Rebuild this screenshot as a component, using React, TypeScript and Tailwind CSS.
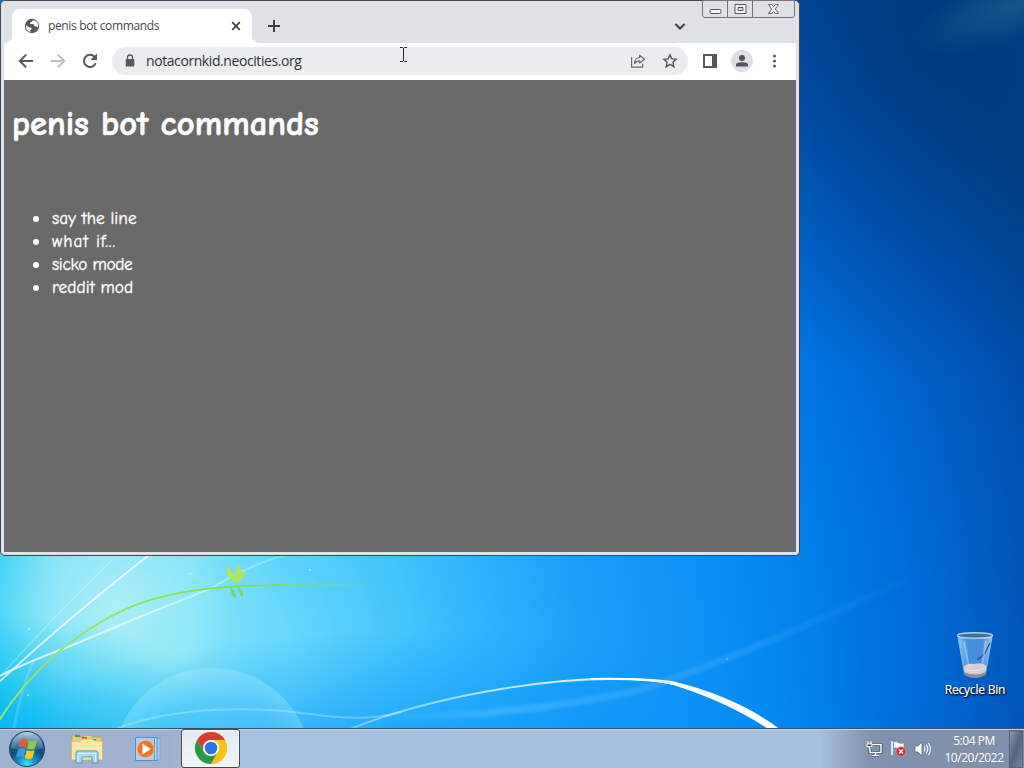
const comic = "font-['Comic_Sans_MS','Comic_Neue','Open_Sans',sans-serif]";
const ui = "font-['Open_Sans','Noto_Sans',sans-serif]";

function Wallpaper() {
  return (
    <svg className="absolute inset-0" width="1024" height="768" viewBox="0 0 1024 768">
      <defs>
        <radialGradient id="sky" gradientUnits="userSpaceOnUse" cx="160" cy="665" r="1000">
          <stop offset="0" stopColor="#7ce2f8" />
          <stop offset="0.13" stopColor="#68d8fb" />
          <stop offset="0.27" stopColor="#3cc0fb" />
          <stop offset="0.42" stopColor="#1da0fa" />
          <stop offset="0.6" stopColor="#048af2" />
          <stop offset="0.68" stopColor="#007ae6" />
          <stop offset="0.78" stopColor="#0067d2" />
          <stop offset="0.87" stopColor="#0055b6" />
          <stop offset="0.95" stopColor="#004799" />
          <stop offset="1" stopColor="#014186" />
        </radialGradient>
        <radialGradient id="shade" gradientUnits="userSpaceOnUse" cx="0" cy="0" r="1" gradientTransform="translate(930 50) scale(300 330)">
          <stop offset="0" stopColor="#00397c" stopOpacity="0.75" />
          <stop offset="1" stopColor="#00397c" stopOpacity="0" />
        </radialGradient>
        <radialGradient id="glow" gradientUnits="userSpaceOnUse" cx="115" cy="605" r="170">
          <stop offset="0" stopColor="#c8f7f6" stopOpacity="0.7" />
          <stop offset="0.5" stopColor="#a8f0f6" stopOpacity="0.5" />
          <stop offset="1" stopColor="#6cdcfb" stopOpacity="0" />
        </radialGradient>
        <radialGradient id="low" gradientUnits="userSpaceOnUse" cx="0" cy="0" r="1" gradientTransform="translate(430 800) scale(520 170)">
          <stop offset="0" stopColor="#0090fa" stopOpacity="0.9" />
          <stop offset="1" stopColor="#0090fa" stopOpacity="0" />
        </radialGradient>
        <radialGradient id="corner" gradientUnits="userSpaceOnUse" cx="0" cy="0" r="1" gradientTransform="translate(0 735) scale(230 120)">
          <stop offset="0" stopColor="#00b4ef" stopOpacity="0.9" />
          <stop offset="1" stopColor="#10c0f4" stopOpacity="0" />
        </radialGradient>
        <linearGradient id="left" x1="0" x2="1">
          <stop offset="0" stopColor="#20cdf2" stopOpacity="0.8" />
          <stop offset="1" stopColor="#20cdf2" stopOpacity="0" />
        </linearGradient>
        <radialGradient id="haze" gradientUnits="userSpaceOnUse" cx="0" cy="0" r="1" gradientTransform="translate(1015 5) rotate(-20) scale(110 35)">
          <stop offset="0" stopColor="#357590" stopOpacity="0.4" />
          <stop offset="1" stopColor="#357590" stopOpacity="0" />
        </radialGradient>
        <linearGradient id="stem" gradientUnits="userSpaceOnUse" x1="0" y1="0" x2="390" y2="0">
          <stop offset="0" stopColor="#a5e65a" />
          <stop offset="0.6" stopColor="#7fdc50" />
          <stop offset="0.8" stopColor="#72e08c" stopOpacity="0.8" />
          <stop offset="1" stopColor="#62d8c0" stopOpacity="0" />
        </linearGradient>
        <linearGradient id="arc" gradientUnits="userSpaceOnUse" x1="350" y1="0" x2="640" y2="0">
          <stop offset="0" stopColor="#fff" stopOpacity="0.35" />
          <stop offset="1" stopColor="#fff" />
        </linearGradient>
        <linearGradient id="beam" gradientUnits="userSpaceOnUse" x1="0" y1="0" x2="290" y2="0">
          <stop offset="0" stopColor="#fff" stopOpacity="0.8" />
          <stop offset="0.3" stopColor="#fff" stopOpacity="0.65" />
          <stop offset="1" stopColor="#fff" stopOpacity="0.2" />
        </linearGradient>
        <radialGradient id="bubble">
          <stop offset="0" stopColor="#b8f2ff" stopOpacity="0" />
          <stop offset="0.7" stopColor="#b8f2ff" stopOpacity="0.06" />
          <stop offset="1" stopColor="#b8f2ff" stopOpacity="0.28" />
        </radialGradient>
        <linearGradient id="ray" gradientUnits="userSpaceOnUse" x1="380" y1="720" x2="940" y2="570">
          <stop offset="0" stopColor="#8fdcff" stopOpacity="0" />
          <stop offset="0.2" stopColor="#8fdcff" stopOpacity="0.25" />
          <stop offset="0.6" stopColor="#60b8ff" stopOpacity="0.24" />
          <stop offset="1" stopColor="#4c9cf0" stopOpacity="0" />
        </linearGradient>
        <filter id="soft"><feGaussianBlur stdDeviation="1.8" /></filter>
        <filter id="fine"><feGaussianBlur stdDeviation="0.5" /></filter>
      </defs>
      <rect width="1024" height="768" fill="url(#sky)" />
      <rect width="1024" height="400" fill="url(#shade)" />
      <rect width="1024" height="768" fill="url(#haze)" />
      <rect y="540" width="60" height="200" fill="url(#left)" />
      <rect y="430" width="400" height="338" fill="url(#glow)" />
      <rect y="580" width="1024" height="188" fill="url(#low)" />
      <rect y="580" width="300" height="188" fill="url(#corner)" />
      <circle cx="212" cy="768" r="100" fill="url(#bubble)" />
      <path d="M12 740Q20 690 34 660" stroke="#fff" strokeOpacity=".15" strokeWidth="3" fill="none" />
      <g fill="none" filter="url(#fine)">
        <path d="M-3 684Q60 625 149 555" stroke="#fff" strokeOpacity=".75" strokeWidth="1.8" />
        <path d="M-3 680Q50 620 112 560" stroke="#fff" strokeOpacity=".25" strokeWidth="1.5" />
        <path d="M-3 677Q30 661 68 647Q140 616 212 588Q245 567 284 555" stroke="url(#beam)" strokeWidth="2" />
        <path d="M118 728C180 705 260 707 310 714S380 717 402 712" stroke="#c6f3ff" strokeOpacity=".35" strokeWidth="2" />
        <path d="M-2 722C36 662 84 628 128 608C175 588 230 582 390 585" stroke="url(#stem)" strokeWidth="1.8" />
        <path d="M350 729C430 697 540 679 610 679C640 679 660 680 672 684" stroke="url(#arc)" strokeWidth="1.8" />
      </g>
      <path d="M590 678Q640 677 672 681Q738 697 781 730L770 730Q726 701 670 684Q640 679 590 679Z" fill="#fff" filter="url(#fine)" />
      <path d="M370 716Q500 720 640 690Q760 650 935 566" stroke="url(#ray)" strokeWidth="7" fill="none" filter="url(#soft)" />
      <g fill="#b6e94a" filter="url(#fine)">
        <path d="M227 566Q235 573 236 583Q226 579 227 566Z" />
        <path d="M239 564L240 570L244 566L241 573L246 571Q244 581 236 583Q232 575 239 564Z" fillOpacity=".85" />
        <path d="M230 587Q236 590 236 599Q231 596 230 587Z" fill="#70d66c" />
        <path d="M238 587Q244 589 243 597Q238 595 238 587Z" fill="#79da62" />
      </g>
      <g fill="#bdf2ff" fillOpacity=".8">
        <circle cx="190" cy="574" r="1" /><circle cx="310" cy="570" r="1" /><circle cx="115" cy="595" r="1" />
        <circle cx="29" cy="629" r="1" /><circle cx="28" cy="695" r="1" /><circle cx="727" cy="659" r="1.2" fill="#5cb8ff" />
      </g>
    </svg>
  );
}

function CaptionButtons() {
  return (
    <div className="absolute right-[4px] top-[-1px] flex h-[18px] w-[93px] rounded-b-[3px] border border-[#73767b] bg-[#dfe1e5]">
      <div className="flex w-[25px] justify-center border-r border-[#73767b]">
        <svg width="13" height="16"><rect x="1" y="8.5" width="11" height="4" rx="1.2" fill="#f5f5f5" stroke="#55585c" /></svg>
      </div>
      <div className="flex w-[25px] justify-center border-r border-[#73767b]">
        <svg width="13" height="16"><path fillRule="evenodd" d="M1 3.5h11v9H1zM4 6.5v3h5v-3z" fill="#f5f5f5" stroke="#55585c" /></svg>
      </div>
      <div className="flex flex-1 justify-center">
        <svg width="13" height="16">
          <path d="M1.5 3.5h3.2l1.8 2.2 1.8-2.2h3.2l-3.2 4.5 3.2 4.5H8.3L6.5 10.3 4.7 12.5H1.5L4.7 8z" fill="#f5f5f5" stroke="#686b70" />
        </svg>
      </div>
    </div>
  );
}

function TabStrip() {
  return (
    <div className="flex h-[42px] bg-[#dee1e6] pt-[8px]">
      <svg className="self-end" width="8" height="8"><path d="M8 0v8H0Q8 8 8 0z" fill="#fff" /></svg>
      <div className="flex w-[240px] items-center rounded-t-[8px] bg-white pl-[12px] pr-[10px]">
        <svg width="16" height="16" viewBox="0 0 16 16">
          <circle cx="8" cy="8" r="7.2" fill="#53575b" />
          <path d="M1.8 7.2L5.8 9.6Q7.8 9.4 7.6 11L6.4 12.2V14C3.4 13.2 1.6 10.8 1.8 7.2Z M9 2.2Q8.2 4 6.5 4.3L6 6H9Q10.5 6.4 10 8L12.2 8.6 14 9.4C15.2 5.4 12.6 2.4 9 2.2Z" fill="#fff" />
        </svg>
        <span className={`${ui} ml-[8px] flex-1 whitespace-nowrap text-[12px] leading-[16px] tracking-[-0.36px] text-[#45494d]`}>penis bot commands</span>
        <svg width="12" height="12" viewBox="0 0 12 12"><path d="M2.2 2.2l7.6 7.6M9.8 2.2L2.2 9.8" stroke="#3c4043" strokeWidth="1.7" /></svg>
      </div>
      <svg className="self-end" width="8" height="8"><path d="M0 0v8h8Q0 8 0 0z" fill="#fff" /></svg>
      <svg className="ml-[7px] mt-[10px]" width="14" height="14"><path d="M7 1v12M1 7h12" stroke="#3c4043" strokeWidth="2" /></svg>
      <svg className="ml-auto mr-[110px] mt-[13px]" width="12" height="9"><path d="M1.500 2l4.500 4.500L10.500 2" stroke="#3c4043" strokeWidth="2" fill="none" /></svg>
    </div>
  );
}

function Toolbar() {
  return (
    <div className="flex h-[37px] items-center bg-white pb-[1px] pl-[13px]">
      <svg width="18" height="18" viewBox="0 0 18 18"><path d="M16 9H3M9.2 2.6L2.8 9l6.4 6.4" stroke="#55595d" strokeWidth="2" fill="none" /></svg>
      <svg className="ml-[14px]" width="18" height="18" viewBox="0 0 18 18"><path d="M2 9h13M8.8 2.6L15.2 9l-6.4 6.4" stroke="#bcbec2" strokeWidth="2" fill="none" /></svg>
      <svg className="ml-[14px]" width="18" height="18" viewBox="0 0 18 18">
        <path d="M14.7 11.2A6.1 6.1 0 1 1 13.500 4.800L15 6.400" stroke="#55595d" strokeWidth="2" fill="none" />
        <path d="M16 1.600v6.400H9.600z" fill="#55595d" />
      </svg>
      <div className="ml-[13px] flex h-[28px] w-[576px] items-center rounded-full bg-[#eaecee] pl-[13px] pr-[10px]">
        <svg width="10" height="14" viewBox="0 0 10 14">
          <path d="M2.500 6V3.500a2.500 2.500 0 0 1 5 0V6" stroke="#55595d" strokeWidth="1.3" fill="none" />
          <rect x=".7" y="5" width="8.6" height="7.6" rx="1" fill="#55595d" />
        </svg>
        <span className={`${ui} ml-[11px] flex-1 text-[14px] leading-[20px] tracking-[-0.42px] text-[#303337]`}>notacornkid.neocities.org</span>
        <svg width="16" height="16" viewBox="0 0 16 16" fill="none" stroke="#65696d" strokeWidth="1.2">
          <path d="M1.6 4.2V14.2H12.6V10.8" />
          <path d="M9.600 2.200L14.600 6.200L9.600 10V7.800Q6.400 7.600 4.400 10.600Q4.800 5 9.600 4.500Z" strokeLinejoin="round" />
        </svg>
        <svg className="ml-[16px]" width="16" height="16" viewBox="0 0 16 16"><path d="M8 1.8L9.8 5.9 14.2 6.3 10.9 9.3 11.9 13.7 8 11.4 4.1 13.7 5.1 9.3 1.8 6.3 6.2 5.9Z" fill="none" stroke="#55595d" strokeWidth="1.4" /></svg>
      </div>
      <svg className="ml-[15px]" width="14" height="14"><path d="M0 0h14v14H0zM2 2v10h7V2z" fillRule="evenodd" fill="#55595d" /></svg>
      <div className="ml-[14px] flex h-[22px] w-[22px] items-center justify-center rounded-full bg-[#dcdfe3]">
        <svg width="12" height="12"><circle cx="6" cy="3" r="3" fill="#505459" /><path d="M0 11V9.6C0 6.4 12 6.4 12 9.6V11.400H0z" fill="#505459" /></svg>
      </div>
      <svg className="ml-[20px]" width="4" height="14" fill="#55595d"><circle cx="1.500" cy="2" r="1.500" /><circle cx="1.500" cy="7" r="1.500" /><circle cx="1.500" cy="12" r="1.500" /></svg>
    </div>
  );
}

const commands = [
  { text: "say the line", track: "tracking-[0.04px]" },
  { text: "what if...", track: "tracking-[0.95px]" },
  { text: "sicko mode", track: "tracking-[-0.32px]" },
  { text: "reddit mod", track: "tracking-[0.05px]" },
];

function BrowserWindow() {
  return (
    <div className="absolute left-0 top-0 flex h-[556px] w-[800px] flex-col rounded-[5px] border border-[#44494f] bg-[#dfe3e8] px-[3px] pb-[3px]">
      <CaptionButtons />
      <TabStrip />
      <Toolbar />
      <main className={`${comic} flex-1 bg-[#696969] pl-[8px] text-white`}>
        <h1 className="mt-[22px] h-[45px] whitespace-nowrap text-[34.500px] font-bold leading-[45px] tracking-[0.02px] [-webkit-text-stroke:0.7px_#fff]">penis bot commands</h1>
        <ul className="mt-[60px] text-[17.300px] leading-[23px] [-webkit-text-stroke:0.35px_#fff]">
          {commands.map((c) => (
            <li key={c.text} className="flex items-center pl-[21px]">
              <span className="h-[6px] w-[6px] rounded-full bg-white" />
              <span className={`ml-[13px] ${c.track}`}>{c.text}</span>
            </li>
          ))}
        </ul>
      </main>
    </div>
  );
}

function RecycleBin() {
  return (
    <div className="absolute left-[935px] top-[630px] flex w-[80px] flex-col items-center">
      <svg width="40" height="50" viewBox="0 0 40 50">
        <defs>
          <linearGradient id="bin" x1="0" x2="1"><stop offset="0" stopColor="#b8daf5" stopOpacity=".85" /><stop offset=".3" stopColor="#5d9fe4" stopOpacity=".75" /><stop offset=".7" stopColor="#5f9fe2" stopOpacity=".75" /><stop offset="1" stopColor="#c0dcf3" stopOpacity=".9" /></linearGradient>
        </defs>
        <path d="M2.500 5L9.500 44Q20 51 30.500 44L37.500 5Z" fill="url(#bin)" stroke="#8ebbe4" strokeWidth=".7" />
        <path d="M8.500 37Q12 33 19 34Q27 32 31.500 36L30 43Q20 47 10 43Z" fill="#d5d0d4" />
        <path d="M9 42Q20 47 31 42L30 45.500Q20 50 10 45.500Z" fill="#8b8a94" />
        <path d="M10 39Q20 43 30 38" stroke="#f2e5df" fill="none" />
        <ellipse cx="20" cy="5.500" rx="17.500" ry="2.800" fill="#356fac" stroke="#b9cbd9" strokeWidth="1.400" />
        <path d="M35 13L30 23Q27 27 22 30" stroke="#21569a" strokeWidth="1.300" fill="none" />
        <path d="M9 12L14 37M31 11L27 36" stroke="#cbe4fa" strokeOpacity=".45" strokeWidth="2" />
      </svg>
      <span className={`${ui} mt-[2px] whitespace-nowrap text-[12px] leading-[16px] tracking-[-0.2px] text-white [text-shadow:1px_1px_2px_#000,0_1px_2px_#000] [-webkit-text-stroke:0.2px_#fff]`}>Recycle Bin</span>
    </div>
  );
}

function StartOrb() {
  return (
    <svg width="38" height="38" viewBox="0 0 38 38">
      <defs>
        <radialGradient id="orb" cx=".5" cy=".92" r=".85"><stop offset="0" stopColor="#3fe3ff" /><stop offset=".28" stopColor="#1592c4" /><stop offset=".6" stopColor="#134874" /><stop offset="1" stopColor="#3d6d92" /></radialGradient>
        <linearGradient id="gloss" x1="0" y1="0" x2="0" y2="1"><stop offset="0" stopColor="#d4e9f6" stopOpacity=".75" /><stop offset="1" stopColor="#88bce0" stopOpacity=".2" /></linearGradient>
      </defs>
      <circle cx="19" cy="19" r="17.500" fill="url(#orb)" stroke="#24445f" />
      <path d="M3 18A16 16 0 0 1 35 18Q19 23 3 18Z" fill="url(#gloss)" />
      <path d="M12.800 9.500Q16 7.500 19.500 9.800L17.700 17.800Q14.500 15.800 10.800 17.600Z" fill="#ee5a24" />
      <path d="M20.800 10.500Q24.500 12.500 29 10.300L26.900 18.500Q23 20.500 19 18.500Z" fill="#8fc93d" />
      <path d="M10.300 19.200Q14 17.300 17.400 19.400L15.500 27.300Q12 25.300 8.200 27.200Z" fill="#3d9be4" />
      <path d="M18.700 20Q22.500 22 26.500 20L24.500 28Q20.800 30 16.800 28Z" fill="#fcc91c" />
    </svg>
  );
}

function Folder() {
  return (
    <svg width="34" height="32" viewBox="0 0 34 32">
      <path d="M2 3Q2 2 3 2H7L9 4H13L15 2H20L22 4H30Q32 4 32 6V27H2Z" fill="#e5cf7b" stroke="#bda050" strokeWidth=".8" />
      <path d="M5 2h5v2H5z" fill="#43a047" /><path d="M12 4h5v2h-5z" fill="#d45a30" /><path d="M20 6h6v1.600h-6z" fill="#4888c8" />
      <path d="M1.500 8H10L13 6H22L25 8H32.500V27H1.500Z" fill="#f6e6a0" stroke="#cfb765" strokeWidth=".8" />
      <path d="M3 11h28M3 15h28" stroke="#fff5c8" />
      <path d="M6 30V20Q6 18 8 18H26Q28 18 28 20V30H22V24H12V30Z" fill="#a4d8f2" stroke="#4e9bc5" strokeWidth="1" />
      <path d="M8 20.500H26M8 22V29M25.500 22V29" stroke="#e4f7ff" strokeWidth="1.200" />
    </svg>
  );
}

function MediaPlayer() {
  return (
    <svg width="28" height="28" viewBox="0 0 28 28">
      <path d="M9 3h17v22H9z" fill="#a4cfed" stroke="#7aa9d0" />
      <path d="M5 2.500h18v23H5z" fill="#c4e1f4" stroke="#4b8bc0" />
      <path d="M1.500 2.500h19v23h-19z" fill="#a9d1ee" stroke="#528fc2" />
      <circle cx="11.500" cy="14" r="8.700" fill="#ee7623" stroke="#fbc59b" strokeWidth=".8" />
      <path d="M8.500 8.500L17 14 8.500 19.500Z" fill="#fff" />
    </svg>
  );
}

function Chrome() {
  return (
    <svg width="34" height="34" viewBox="-17 -17 34 34">
      <circle r="16" fill="#fbc116" />
      <path d="M0-8H13.860A16 16 0 0 0-13.860-8L-6.930 4Z" fill="#df3b2f" />
      <path d="M-13.860-8A16 16 0 0 0 0 16L6.930 4L-6.930 4Z" fill="#2a9a47" />
      <path d="M0-8H13.860A16 16 0 0 1 0 16L6.930 4Z" fill="#fbc116" />
      <circle r="8" fill="#fff" /><circle r="6.300" fill="#2f72df" />
    </svg>
  );
}

function Tray() {
  return (
    <div className="ml-auto flex items-center">
      <svg width="17" height="17" viewBox="0 0 17 17">
        <path d="M6 4.500h9v8H4v-4M9.500 13v2M6 15.500h7" stroke="#34475f" strokeWidth="3" fill="none" />
        <path d="M6 4.500h9v8H4v-4M9.500 13v2M6 15.500h7" stroke="#fff" strokeWidth="1.500" fill="none" />
        <path d="M2 1v3M5 1v3M1 4h5v2.500H1zM3.500 6v4" stroke="#fff" fill="#34475f" />
      </svg>
      <svg className="ml-[7px]" width="17" height="17" viewBox="0 0 17 17">
        <path d="M2 1v14" stroke="#fff" strokeWidth="1.500" /><path d="M3.500 2Q6 1 8 2.500T14 3V9Q10 10 8 8.500T3.500 8.500Z" fill="#fff" stroke="#5b6d82" strokeWidth=".5" />
        <circle cx="11" cy="11.500" r="4.800" fill="#d8292c" stroke="#f0a3a2" strokeWidth=".5" /><path d="M9 9.500l4 4m0-4l-4 4" stroke="#fff" strokeWidth="1.500" />
      </svg>
      <svg className="ml-[7px]" width="18" height="16" viewBox="0 0 18 16">
        <path d="M1 5h3l4-4v14l-4-4H1z" fill="#fff" stroke="#4c5f78" strokeWidth=".7" />
        <path d="M10 5.500q1.700 2.500 0 5M12.200 3.500q3 4.500 0 9M14.400 2q4 6 0 12" stroke="#fff" strokeWidth="1.100" fill="none" />
      </svg>
      <div className={`${ui} ml-[10px] flex w-[64px] flex-col items-center whitespace-nowrap text-[12px] leading-[17px] tracking-[-0.45px] text-white`}>
        <span>5:04 PM</span>
        <span>10/20/2022</span>
      </div>
      <div className="ml-[3px] mr-[1px] h-[38px] w-[14px] border border-[#56667a] bg-linear-to-br from-[#8b9aae] via-[#566579] to-[#75859b]" />
    </div>
  );
}

function Taskbar() {
  return (
    <div className="relative flex h-[40px] items-center border-t border-[#38566e] bg-[linear-gradient(to_right,#9eb3cf_0,#a0b1cf_170px,#a7c1df_240px,#a6c0de_820px,#8093ad_870px,#7e90aa_100%)] shadow-[inset_0_1px_0_#bdd3e8]">
      <div className="ml-[8px]"><StartOrb /></div>
      <div className="ml-[24px]"><Folder /></div>
      <div className="ml-[30px]"><MediaPlayer /></div>
      <div className="ml-[19px] flex h-[39px] w-[59px] items-center justify-center rounded-[3px] border border-[#3d4a58] bg-linear-to-b from-[#e2eaf4] to-[#f1f5fa] pb-[2px] shadow-[inset_0_0_0_1px_#fff]"><Chrome /></div>
      <Tray />
    </div>
  );
}

export default function App() {
  return (
    <div className="relative flex h-[768px] w-[1024px] flex-col overflow-hidden">
      <Wallpaper />
      <div className="relative flex-1">
        <BrowserWindow />
        <RecycleBin />
        <svg className="absolute left-[399px] top-[46px]" width="9" height="17"><path d="M1 1.500h2.500l1 1 1-1H8M4.500 2v13M1 15.500h2.500l1-1 1 1H8" stroke="#222" fill="none" /></svg>
      </div>
      <Taskbar />
    </div>
  );
}
